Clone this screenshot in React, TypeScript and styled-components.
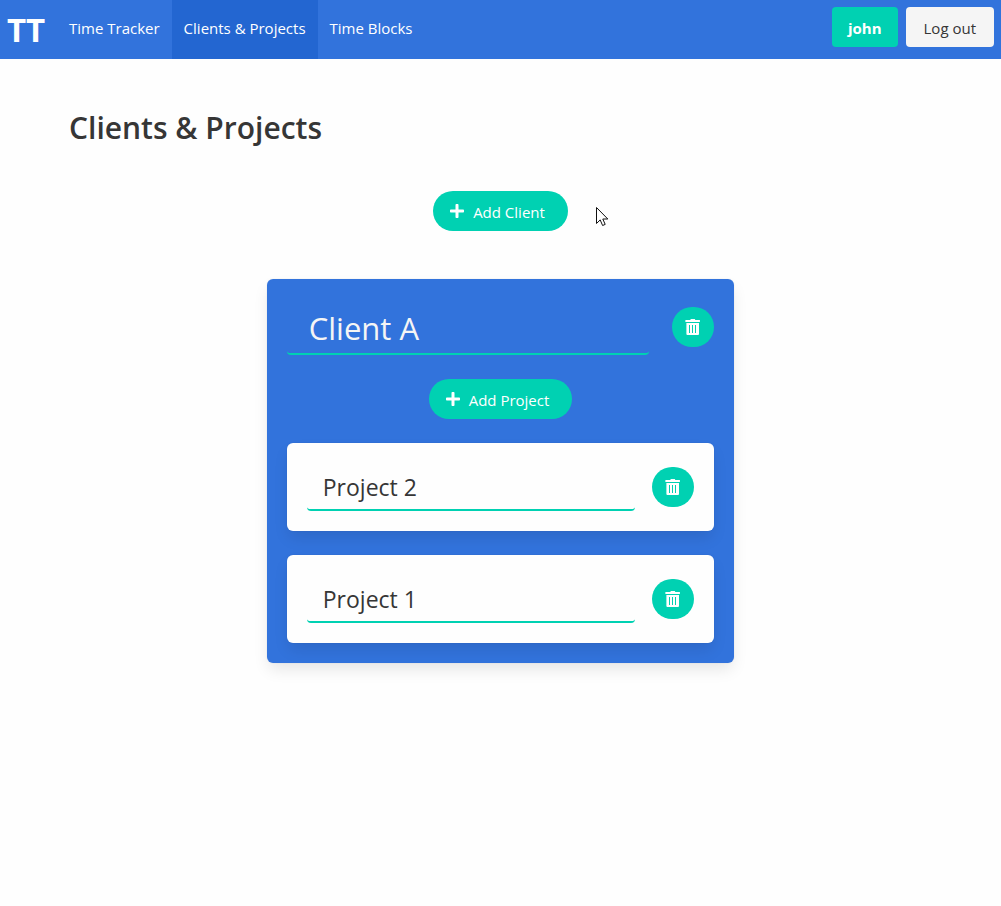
import React from "react";
import styled, { createGlobalStyle, css } from "styled-components";
import { FaPlus } from "react-icons/fa";

const blue = "#3273dc";
const blueDark = "#2366d1";
const teal = "#00d1b2";
const ink = "#363636";

const GlobalStyle = createGlobalStyle`
  *, *::before, *::after { box-sizing: border-box; }
  body {
    margin: 0;
    background: #fefefe;
    color: ${ink};
    font-family: "Segoe UI", "Open Sans", "Noto Sans", sans-serif;
    font-size: 15px;
    line-height: 24px;
  }
  button, input { font: inherit; margin: 0; }
`;

const Navbar = styled.nav`
  display: flex;
  align-items: stretch;
  min-height: 59px;
  padding: 0 7px;
  background: ${blue};
`;

const Brand = styled.a`
  display: flex;
  align-items: center;
  width: 50px;
  color: #fff;
  font-size: 33px;
  font-weight: 700;
  text-decoration: none;
`;

const NavLink = styled.a<{ $active?: boolean }>`
  display: flex;
  align-items: center;
  padding: 0 12px 4px;
  color: #fff;
  background: ${(p) => (p.$active ? blueDark : "transparent")};
  text-decoration: none;
  white-space: nowrap;
`;

const NavActions = styled.div`
  display: flex;
  gap: 8px;
  margin-left: auto;
  padding-top: 7px;
`;

const NavButton = styled.button<{ $primary?: boolean }>`
  height: 40px;
  padding: ${(p) => (p.$primary ? "2px 16px 0" : "2px 18px 0")};
  border: 0;
  border-radius: 4px;
  background: ${(p) => (p.$primary ? teal : "#f5f5f5")};
  color: ${(p) => (p.$primary ? "#fff" : ink)};
  font-weight: ${(p) => (p.$primary ? 700 : 400)};
  white-space: nowrap;
`;

const Page = styled.main`
  padding: 49px 33px;
`;

const Title = styled.h1`
  margin: 0 0 43px;
  padding: 0 36px;
  font-size: 30px;
  font-weight: 600;
  line-height: 40px;
`;

const ActionRow = styled.div`
  display: flex;
  justify-content: center;
`;

const PointerAnchor = styled.div`
  position: relative;
`;

const Pointer = styled.svg`
  position: absolute;
  top: 16px;
  left: calc(100% + 28px);
`;

const PillButton = styled.button`
  display: flex;
  align-items: center;
  gap: 8px;
  height: 40px;
  padding: 0 23px 0 16px;
  border: 0;
  border-radius: 20px;
  background: ${teal};
  color: #fff;
  white-space: nowrap;

  span { padding-top: 2px; }
`;

const cardShape = css`
  padding: 20px;
  border-radius: 6px;
  box-shadow: 0 8px 16px -2px rgba(10, 10, 10, 0.1), 0 0 0 1px rgba(10, 10, 10, 0.02);
`;

const ClientCard = styled.section`
  ${cardShape}
  display: flex;
  flex-direction: column;
  gap: 24px;
  width: 50%;
  margin: 48px auto 0;
  background: ${blue};
`;

const ProjectCard = styled.article`
  ${cardShape}
  background: #fefefe;
`;

const FieldRow = styled.div<{ $gap: number }>`
  display: flex;
  align-items: center;
  gap: ${(p) => p.$gap}px;
`;

const NameInput = styled.input<{ $large?: boolean }>`
  flex: 1;
  min-width: 0;
  height: ${(p) => (p.$large ? 56 : 48)}px;
  padding: ${(p) => (p.$large ? "4px 22px 0" : "2px 16px 0")};
  border: 2px solid transparent;
  border-width: 0 0 2px;
  border-bottom-color: ${teal};
  border-radius: 4px;
  outline: 0;
  background: transparent;
  color: ${(p) => (p.$large ? "#f5f5f5" : ink)};
  font-size: ${(p) => (p.$large ? 31 : 23)}px;
`;

const DeleteButton = styled.button`
  display: flex;
  align-items: center;
  justify-content: center;
  width: 42px;
  height: 40px;
  padding: 0;
  border: 0;
  border-radius: 20px;
  background: ${teal};
  color: #fff;
`;

const TrashIcon = () => (
  <svg width="16" height="16" viewBox="0 0 16 16" fill="currentColor" aria-hidden>
    <path d="M5.3 1 5.8 0h4l.5 1H14.6a.4.4 0 0 1 .4.4V2.6a.4.4 0 0 1-.4.4H.7a.4.4 0 0 1-.4-.4V1.4A.4.4 0 0 1 .7 1z" />
    <path
      fillRule="evenodd"
      d="M1.4 4H14v11a1 1 0 0 1-1 1H2.4a1 1 0 0 1-1-1zM4 6v8h1V6zm3 0v8h1V6zm3 0v8h1V6z"
    />
  </svg>
);

const projects = ["Project 2", "Project 1"];

export default function App() {
  return (
    <>
      <GlobalStyle />
      <Navbar aria-label="Main">
        <Brand href="#">TT</Brand>
        <NavLink href="#tracker">Time Tracker</NavLink>
        <NavLink href="#clients" $active aria-current="page">
          Clients &amp; Projects
        </NavLink>
        <NavLink href="#blocks">Time Blocks</NavLink>
        <NavActions>
          <NavButton type="button" $primary>john</NavButton>
          <NavButton type="button">Log out</NavButton>
        </NavActions>
      </Navbar>
      <Page>
        <Title>Clients &amp; Projects</Title>
        <ActionRow>
          <PointerAnchor>
            <PillButton type="button">
              <FaPlus size={16} aria-hidden />
              <span>Add Client</span>
            </PillButton>
            <Pointer width="13" height="20" viewBox="0 0 13 20" aria-hidden>
              <path
                d="M.5.5v16l3.7-3.6 2.4 5.6 2.6-1.1-2.4-5.4h5z"
                fill="#fff"
                stroke="#111"
                strokeWidth="1"
              />
            </Pointer>
          </PointerAnchor>
        </ActionRow>
        <ClientCard>
          <FieldRow $gap={23}>
            <NameInput $large aria-label="Client name" defaultValue="Client A" />
            <DeleteButton type="button" aria-label="Delete client">
              <TrashIcon />
            </DeleteButton>
          </FieldRow>
          <ActionRow>
            <PillButton type="button">
              <FaPlus size={16} aria-hidden />
              <span>Add Project</span>
            </PillButton>
          </ActionRow>
          {projects.map((name) => (
            <ProjectCard key={name}>
              <FieldRow $gap={17}>
                <NameInput aria-label="Project name" defaultValue={name} />
                <DeleteButton type="button" aria-label={`Delete ${name}`}>
                  <TrashIcon />
                </DeleteButton>
              </FieldRow>
            </ProjectCard>
          ))}
        </ClientCard>
      </Page>
    </>
  );
}
